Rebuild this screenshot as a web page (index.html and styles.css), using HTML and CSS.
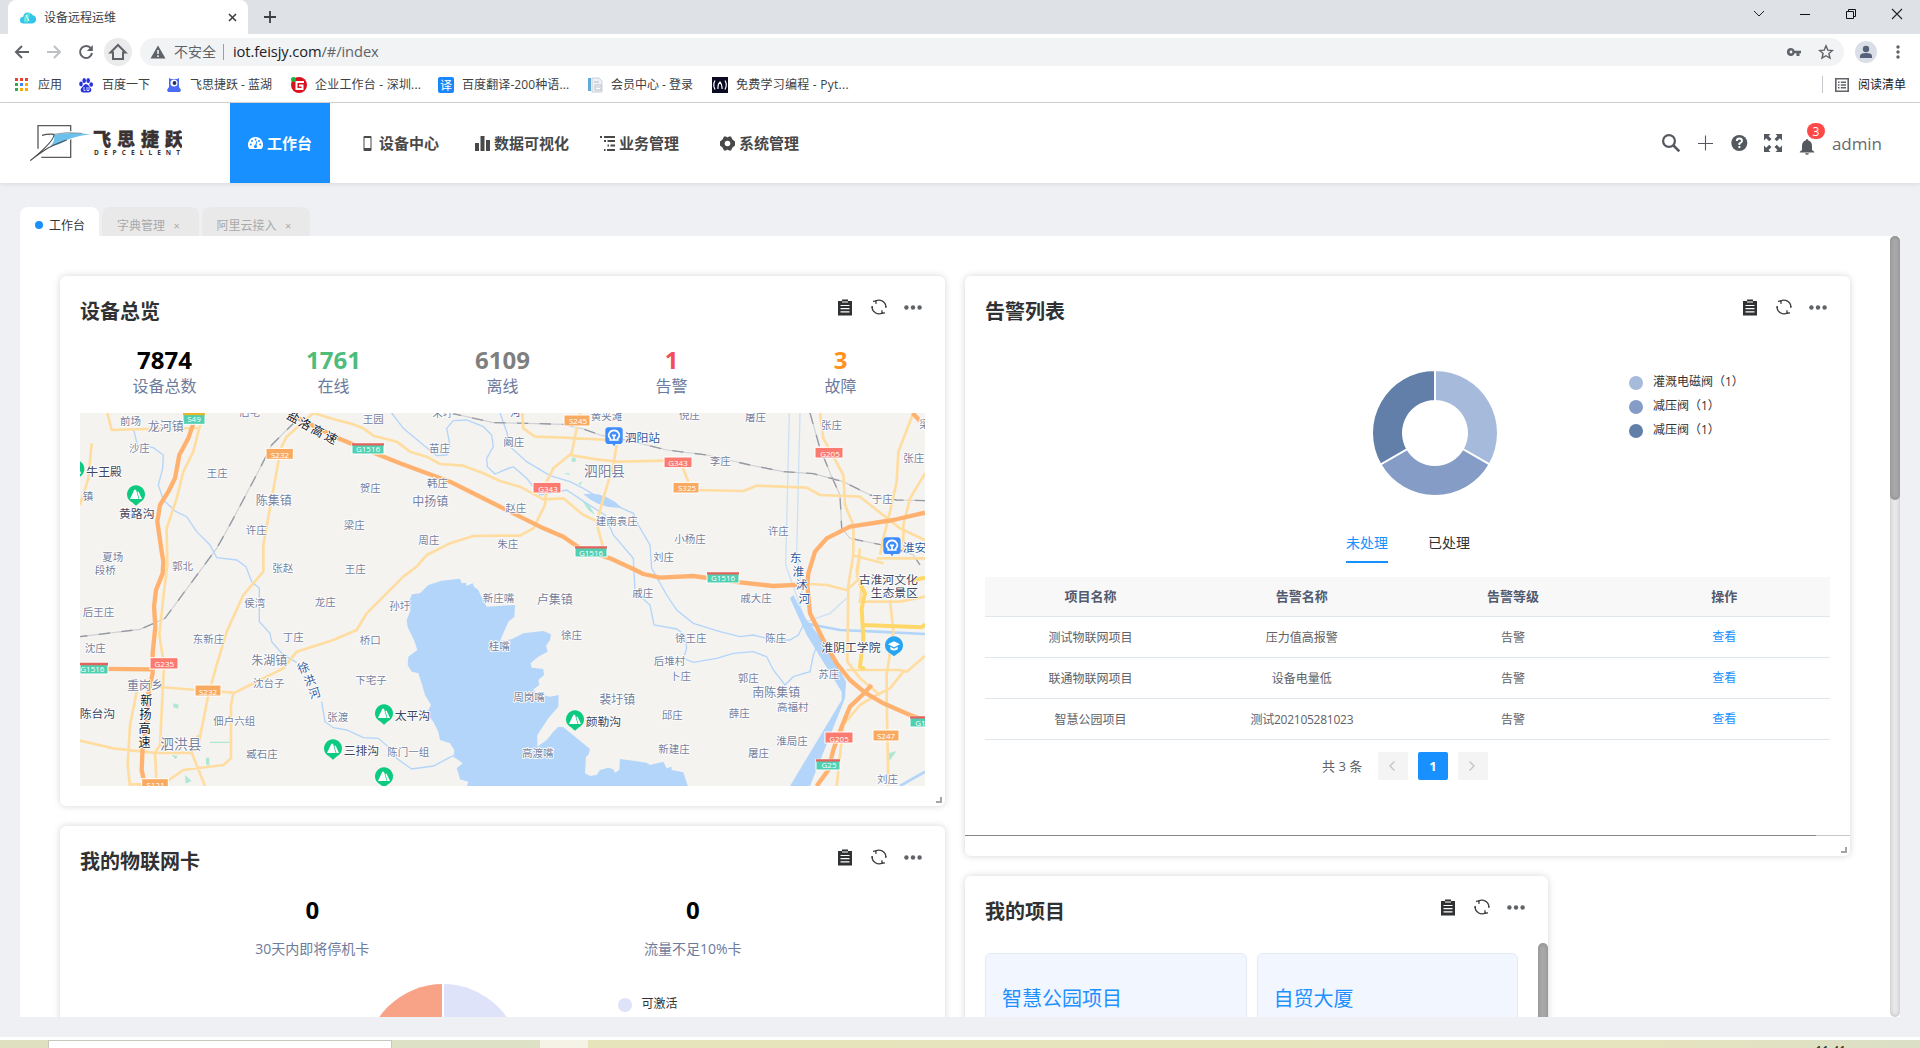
FILE: index.html
```html
<!DOCTYPE html>
<html lang="zh-CN">
<head>
<meta charset="utf-8">
<title>设备远程运维</title>
<link rel="stylesheet" href="styles.css">
</head>
<body>
<svg class="defs" width="0" height="0">
  <symbol id="clipboard" viewBox="0 0 14 17"><path fill="#2f3133" d="M0 2h4V0.500h6V2h4v14.500H0z"/><path stroke="#fff" stroke-width="1.200" d="M2.500 6.500h9M2.500 9.700h9M2.500 12.900h9M4 3h6"/></symbol>
  <symbol id="refresh" viewBox="0 0 16 16"><g fill="none" stroke="#3c3e42" stroke-width="1.300"><path d="M4.200 2.400A6.800 6.800 0 0 1 14.800 8.600M1.200 7a6.800 6.800 0 0 0 10.600 6.600"/><path d="M2 2.300l2.800-.4.300 3M14 13.900l-2.900.3-.2-3"/><path d="M1.200 7.500V9M14.800 8.500V7"/></g></symbol>
  <symbol id="dots" viewBox="0 0 18 5"><g fill="#5f6266"><circle cx="2.400" cy="2.500" r="2.200"/><circle cx="9" cy="2.500" r="2.200"/><circle cx="15.600" cy="2.500" r="2.200"/></g></symbol>
  <symbol id="grip" viewBox="0 0 6 6"><path d="M6 0v6H0V4h4V0z" fill="#a5a5a5"/></symbol>
  <g id="pin-park"><path d="M0 34L-12 24A27 27 0 1 1 12 24z" fill="#0cca80"/><path d="M-18 14L-5-14 0-14 8 14zM10 14L4-8 8-8 18 14z" fill="#fff"/></g>
  <g id="pin-rail"><rect x="-26" y="-26" width="52" height="50" rx="10" fill="#3f8cff"/><path d="M-6 22h12l-6 9z" fill="#3f8cff"/><path d="M-9 9C-24-2-12-17 0-17S24-2 9 9M-14 12h28M-6-2h12M0-2v12" fill="none" stroke="#fff" stroke-width="5"/></g>
  <g id="pin-school"><path d="M0 32L-12 23A27 27 0 1 1 12 23z" fill="#27a5f5"/><path d="M-18-4L0-13 18-4 0 5zM-11 3v8q11 7 22 0V3L0 9z" fill="#fff"/></g>
</svg>

<div class="tabstrip">
  <div class="browser-tab">
    <svg width="16" height="14" viewBox="0 0 16 14"><path d="M3.500 13.500a3.400 3.400 0 0 1-.3-6.800A5 5 0 0 1 12.500 5a4.300 4.300 0 0 1 0 8.500z" fill="#35c5ec"/><path d="M4 12c-1-5 2-9 6-9L8 12z" fill="#62e6d8"/><path d="M6 5l3 6" stroke="#fff"/></svg>
    <span>设备远程运维</span>
    <svg class="tab-close" width="9" height="9" viewBox="0 0 9 9"><path d="M1 1l7 7M8 1L1 8" stroke="#3c4043" stroke-width="1.600"/></svg>
  </div>
  <svg class="new-tab" width="12" height="12" viewBox="0 0 12 12"><path d="M6 0v12M0 6h12" stroke="#3c4043" stroke-width="1.800"/></svg>
  <div class="win-controls">
    <svg width="12" height="12" viewBox="0 0 12 12"><path d="M1 3l5 5 5-5" fill="none" stroke="#222"/></svg>
    <svg width="12" height="12" viewBox="0 0 12 12"><path d="M1 6.500h10" stroke="#111"/></svg>
    <svg width="12" height="12" viewBox="0 0 12 12"><path d="M1.500 3.500h7v7h-7zM3.500 3.500v-2h7v7h-2" fill="none" stroke="#111"/></svg>
    <svg width="12" height="12" viewBox="0 0 12 12"><path d="M1 1l10 10M11 1L1 11" stroke="#222" stroke-width="1.100"/></svg>
  </div>
</div>

<div class="toolbar">
  <svg class="tool" viewBox="0 0 28 28"><path d="M21 14H8M14 8l-6 6 6 6" fill="none" stroke="#5f6368" stroke-width="2"/></svg>
  <svg class="tool" viewBox="0 0 28 28"><path d="M7 14h13M14 8l6 6-6 6" fill="none" stroke="#bdc0c4" stroke-width="2"/></svg>
  <svg class="tool" viewBox="0 0 28 28"><path d="M19 10.500A6 6 0 1 0 20 15" fill="none" stroke="#5f6368" stroke-width="2"/><path d="M20.800 7v6h-6z" fill="#5f6368"/></svg>
  <svg class="tool home" viewBox="0 0 28 28"><path d="M6.500 14.500L14 7l7.500 7.500H19V21H9v-6.500z" fill="none" stroke="#5f6368" stroke-width="2"/></svg>
  <div class="omnibox">
    <svg width="16" height="14" viewBox="0 0 16 14"><path d="M8 .5L15.500 13.500H.5z" fill="#5f6368"/><path d="M8 5v4M8 10.300v1.600" stroke="#f1f3f4" stroke-width="1.600"/></svg>
    <span class="insecure">不安全</span>
    <span class="url">iot.feisjy.com<i>/#/index</i></span>
    <svg class="key" width="14" height="8" viewBox="0 0 14 8"><path d="M4 0a4 4 0 1 0 3.700 5.300H9.500V8h3V5.300H14V2.700H7.700A4 4 0 0 0 4 0zm0 2.600a1.400 1.400 0 1 1 0 2.800 1.400 1.400 0 0 1 0-2.800z" fill="#5f6368"/></svg>
    <svg width="16" height="16" viewBox="0 0 16 16"><path d="M8 1.800l1.800 4.300 4.600.4-3.500 3 1.100 4.600L8 11.700l-4 2.400 1.100-4.600-3.500-3 4.600-.4z" fill="none" stroke="#5f6368" stroke-width="1.400"/></svg>
  </div>
  <svg class="avatar" width="22" height="22" viewBox="0 0 22 22"><circle cx="11" cy="11" r="11" fill="#dadee6"/><circle cx="11" cy="8" r="3.200" fill="#546179"/><path d="M5 17v-2q0-3 6-3t6 3v2z" fill="#546179"/></svg>
  <svg width="4" height="14" viewBox="0 0 4 14"><g fill="#5f6368"><circle cx="2" cy="2" r="1.700"/><circle cx="2" cy="7" r="1.700"/><circle cx="2" cy="12" r="1.700"/></g></svg>
</div>

<div class="bookmarks">
  <div class="mark"><svg viewBox="0 0 16 16"><path d="M1 1h3v3H1zM6 1h3v3H6zM11 1h3v3h-3z" fill="#ea4335"/><path d="M1 6h3v3H1zM1 11h3v3H1z" fill="#34a853"/><path d="M6 6h3v3H6z" fill="#4285f4"/><path d="M11 6h3v3h-3zM6 11h3v3H6zM11 11h3v3h-3z" fill="#fbaa05"/></svg><span class="w24">应用</span></div>
  <div class="mark"><svg viewBox="0 0 16 16"><g fill="#2a32df"><ellipse cx="3" cy="7" rx="1.800" ry="2.400"/><ellipse cx="6.200" cy="3.600" rx="1.800" ry="2.500"/><ellipse cx="10.200" cy="3.600" rx="1.800" ry="2.500"/><ellipse cx="13.200" cy="7.500" rx="1.800" ry="2.300"/><path d="M8 7c2 0 3 2.500 4.500 4s1 4.500-2 4.500H5.500c-3 0-3.500-3-2-4.500S6 7 8 7z"/></g><path d="M6 10v3.500h1.500M9 10v3.500h2V10" fill="none" stroke="#fff" stroke-width=".8"/></svg><span class="w48">百度一下</span></div>
  <div class="mark"><svg viewBox="0 0 16 16"><path d="M3 1l2 1h6l2-1v9l2 3-1 2H2l-1-2 2-3z" fill="#4a6bf5"/><circle cx="8" cy="6" r="3.500" fill="#fff"/><circle cx="8.500" cy="6" r="1.900" fill="#24315a"/></svg><span class="w85">飞思捷跃 - 蓝湖</span></div>
  <div class="mark"><svg viewBox="0 0 16 16"><circle cx="8" cy="8" r="8" fill="#d8121f"/><circle cx="2.500" cy="2.500" r="2.500" fill="#15b63c"/><path d="M13 5H5.500v7h6V8.500H8" fill="none" stroke="#fff" stroke-width="2"/></svg><span class="w107">企业工作台 - 深圳...</span></div>
  <div class="mark"><svg viewBox="0 0 16 16"><rect width="16" height="16" rx="2" fill="#1787fb"/><text x="8" y="12.500" font-size="12" text-anchor="middle" fill="#fff">译</text></svg><span class="w109">百度翻译-200种语...</span></div>
  <div class="mark"><svg viewBox="0 0 16 16"><path d="M1 1h3v13H1z" fill="#62a8d8"/><path d="M5 1h7l3 3v11H5z" fill="#eef1f5" stroke="#c9d0d8"/><path d="M7 5h5M8 8h6v5H8zM9 10h4" fill="#fff" stroke="#b5bdc8"/></svg><span class="w85">会员中心 - 登录</span></div>
  <div class="mark"><svg viewBox="0 0 16 16"><path fill="#0a0a23" d="M0 0h16v16H0z"/><path d="M3 3.500q-2.500 4.500 0 9M13 3.500q2.500 4.500 0 9M6 12q-.5-5 2-7 2.500 3 2 7" fill="none" stroke="#fff" stroke-width="1.200"/></svg><span class="last">免费学习编程 - Pyt...</span></div>
  <div class="reading"><svg width="14" height="14" viewBox="0 0 14 14"><path d="M.8.800h12.400v12.400H.8z" fill="none" stroke="#5f6368" stroke-width="1.600"/><path d="M3 4.200h1.500M3 7h1.500M3 9.800h1.500M5.800 4.200H11M5.800 7H11M5.800 9.800H11" stroke="#5f6368" stroke-width="1.500"/></svg><span>阅读清单</span></div>
</div>

<header class="app-header">
  <svg class="logo" width="154" height="40" viewBox="28 123 154 40">
    <g transform="translate(20 108) scale(.33333)"><path d="M54 122V53h98v17M152 94v54H64" fill="none" stroke="#5a5b5d" stroke-width="4"/><path d="M100 81Q150 68 210 79 150 86 112 120L34 156Q78 122 97 94z" fill="#fff"/><path d="M102 80Q150 70 210 79 150 86 124 106 110 112 92 114 106 98 102 80z" fill="#6cc0ec"/><path d="M66 82Q84 77 102 79 104 98 32 157 62 134 78 124 96 112 140 96" fill="none" stroke="#4c4f52" stroke-width="3.500" stroke-linejoin="round"/><path d="M100 79Q140 70 186 76" fill="none" stroke="#68777f" stroke-width="2"/></g>
    <text class="logo-name" x="93" y="145.500" textLength="90">飞思捷跃</text>
    <text class="logo-sub" x="94" y="154.800" textLength="86">DEPCELLENT</text>
  </svg>
  <nav>
    <a class="nav-item active"><svg width="15" height="13" viewBox="0 0 15 13"><path d="M7.500 0A7.500 7.500 0 0 0 1.500 12h12A7.500 7.500 0 0 0 7.500 0z" fill="#fff"/><g fill="#1890ff"><circle cx="2.800" cy="7.500" r="1"/><circle cx="4" cy="4" r="1"/><circle cx="7.500" cy="2.500" r="1"/><circle cx="12.200" cy="7.500" r="1"/><circle cx="11" cy="4" r="1"/><circle cx="7.500" cy="9.500" r="1.600"/><path d="M7 9l1.500-5 .8.300L8.300 9z"/></g></svg><span>工作台</span></a>
    <a class="nav-item devices"><svg width="15" height="15" viewBox="0 0 15 15"><path d="M4.500 0h6a1 1 0 0 1 1 1v13a1 1 0 0 1-1 1h-6a1 1 0 0 1-1-1V1a1 1 0 0 1 1-1zM4.500 2v10h6V2z" fill="#484848" fill-rule="evenodd"/></svg><span>设备中心</span></a>
    <a class="nav-item charts"><svg width="15" height="15" viewBox="0 0 15 15"><path d="M0 7h4v8H0zM5.500 0h4v15h-4zM11 4h4v11h-4z" fill="#484848"/></svg><span>数据可视化</span></a>
    <a class="nav-item business"><svg width="15" height="15" viewBox="0 0 15 15"><path d="M0 1h2M4 1h11M4 5h2M7.500 5H15M7.500 9.500h1.500M10.500 9.500H15M4 14h1.500M7 14h8" stroke="#484848" stroke-width="1.800"/></svg><span>业务管理</span></a>
    <a class="nav-item system"><svg width="15" height="15" viewBox="0 0 15 15"><path d="M4 .5h2l1.500 1L9 .5h2l1.500 3 2.500 2v4l-2.500 2-1.500 3H9l-1.500-1-1.500 1H4l-1.500-3-2.500-2v-4l2.500-2zM7.500 4.700a2.800 2.800 0 1 0 0 5.600 2.800 2.800 0 0 0 0-5.600z" fill="#484848" fill-rule="evenodd"/></svg><span>系统管理</span></a>
  </nav>
  <div class="header-tools">
    <svg viewBox="0 0 18 18"><circle cx="7" cy="7" r="5.900" fill="none" stroke="#54585f" stroke-width="2.200"/><path d="M11 11l6.300 6.300" stroke="#54585f" stroke-width="2.600"/></svg>
    <svg viewBox="0 0 18 18"><path d="M9.500 1.500v15M2 9.500h15" stroke="#54585f" stroke-width="1.100"/></svg>
    <svg viewBox="0 0 18 18"><circle cx="9.300" cy="9" r="8" fill="#54585f"/><path d="M6.800 7q0-2.500 2.600-2.500T12 7Q12 8.200 9.400 9.500V11M9.400 12v2" fill="none" stroke="#fff" stroke-width="1.900"/></svg>
    <svg viewBox="0 0 18 18"><path d="M0 0h6.500L4.500 2l3 3-2.300 2.300-3-3L0 6.500zM18 0h-6.500l2 2-3 3 2.300 2.300 3-3L18 6.500zM0 18h6.500l-2-2 3-3-2.300-2.300-3 3L0 11.500zM18 18h-6.500l2-2-3-3 2.300-2.300 3 3 2.200-2.200z" fill="#54585f"/></svg>
    <div class="bell"><svg viewBox="0 0 18 18"><path d="M9 2q1 0 1 1.200Q14 4.500 14 9v4l2.200 1.800v.7H1.800v-.7L4 13V9q0-4.500 4-5.800Q8 2 9 2zM7 16.300h4q-.5 1.500-2 1.500t-2-1.500z" fill="#54585f"/></svg><span class="badge">3</span></div>
    <span class="user">admin</span>
  </div>
</header>

<div class="page-tabs">
  <div class="page-tab on"><i></i>工作台</div>
  <div class="page-tab">字典管理<b>×</b></div>
  <div class="page-tab">阿里云接入<b>×</b></div>
</div>

<main class="workspace">
  <div class="board">
    <div class="column">
      <section class="card overview">
        <div class="card-head"><h2>设备总览</h2><div class="actions"><svg class="i-clip"><use href="#clipboard"/></svg><svg class="i-ref"><use href="#refresh"/></svg><svg class="i-dots"><use href="#dots"/></svg></div></div>
        <div class="stats">
          <div><strong>7874</strong><span>设备总数</span></div>
          <div><strong class="green">1761</strong><span>在线</span></div>
          <div><strong class="gray">6109</strong><span>离线</span></div>
          <div><strong class="red">1</strong><span>告警</span></div>
          <div><strong class="orange">3</strong><span>故障</span></div>
        </div>
        <svg class="map" width="845" height="373" viewBox="90 444 2535 1119">
          <path fill="#f4f3f0" d="M90 444h2535v1119H90z"/>
          <!-- lake -->
          <path transform="translate(0 825)" fill="#b3d5fa" d="M1086 163L1110 160 1135 135 1175 122 1230 116 1235 130 1248 128 1250 138 1268 130 1272 140 1285 150 1295 172 1310 200 1395 195 1393 230 1375 245 1350 303 1385 298 1420 280 1480 273 1503 283 1500 300 1488 318 1493 335 1470 347 1455 358 1442 370 1445 383 1480 387 1482 405 1465 420 1468 435 1450 448 1460 462 1500 470 1526 465 1525 500 1495 535 1462 585 1462 620 1490 600 1510 575 1525 560 1540 562 1575 590 1620 627 1615 645 1608 650 1605 700 1620 708 1640 705 1650 690 1675 683 1690 688 1695 698 1708 690 1710 657 1750 662 1790 668 1800 675 1840 665 1850 685 1865 680 1865 690 1900 697 1914 740 1250 740 1255 725 1230 718 1225 700 1220 685 1238 670 1225 660 1210 650 1213 630 1200 610 1170 600 1165 575 1150 545 1130 520 1143 495 1125 465 1115 430 1105 400 1085 395 1073 375 1075 350 1102 330 1092 300 1073 262 1070 240 1082 210 1075 190z"/>
          <!-- rivers -->
          <g class="river">
            <path d="M250 490L262 540 310 548 340 570 338 610 325 660 340 705 375 738 410 755 440 800 480 840 500 878 560 885 588 905 605 950 628 970 628 1070 660 1105 665 1130 700 1170 740 1192M815 1310L825 1370 850 1388 890 1395 940 1418 985 1420 1020 1450 1040 1480 1085 1512 1150 1503 1210 1472M1025 444L1060 490 1120 540 1160 572 1190 570 1200 540 1190 490 1210 467 1250 465 1300 485 1325 510 1330 545 1310 580 1312 605 1335 627 1380 608M1350 444L1370 500 1380 545 1430 590 1500 632 1560 650 1600 670 1660 705 1750 745 1765 780 1800 840 1805 910 1850 990 1880 1035 1930 1075 2010 1100 2070 1115 2110 1110 2170 1125 2220 1125 2245 1110 2260 1080 M1350 620L1390 605 1430 640 1470 690 1550 675 1610 715 1665 750 1690 810 1750 880 1755 980 1800 1020 1812 1080 1880 1092 1905 1110 1910 1150 1900 1180 1930 1192 2000 1180 2050 1165 2110 1160 2150 1175 2170 1215 2205 1260 2230 1235 2280 1220 2290 1170 2310 1120"/>
            <path opacity=".6" d="M2218 444L2207 900 2260 1050M2250 444L2240 860 2260 1010M2390 1000L2340 1045 2270 1070"/>
          </g>
          <path d="M1600 688q65-10 115 40-65 5-115-40" fill="#b3d5fa"/>
          <path d="M2230 990L2270 1065 2330 1140 2388 1250 2385 1300 2280 1563 2220 1563 2300 1430 2375 1305 2375 1280 2270 1110 2220 1000z" fill="#b3d5fa"/>
          <path d="M2265 1075L2370 1095 2480 1100 2625 1107M2550 1563L2625 1520" fill="none" stroke="#b3d5fa" stroke-width="8"/>
          <g fill="#aee8d4"><path d="M370 1315l16 4-2 12-14-4zM480 1430h60v4h-60zM468 1478h10v25l-10-5zM365 1470l18 3-6 10zM405 1530l20 18-18 8zM1565 578h12v12h-12zM1595 705l25 20 15 25-20-15zM1540 625h18v5zM1585 655l12-6-6 12zM2515 1465l25-7-22 30z"/></g>
          <!-- railways -->
          <g><path class="rail-base" d="M735 470L665 540 630 610 545 770 500 850 345 1060 270 1093 90 1115M1200 444L1330 473 1430 475 1540 478 1600 492 1650 510 1750 530 1850 555 1970 570 2100 600 2200 620 2290 626 2380 650 2460 690 2540 705 2625 707M2280 444L2310 550 2345 635 2370 690 2375 790 2400 820 2520 845 2590 870 2610 900"/><path class="rail" d="M735 470L665 540 630 610 545 770 500 850 345 1060 270 1093 90 1115M1200 444L1330 473 1430 475 1540 478 1600 492 1650 510 1750 530 1850 555 1970 570 2100 600 2200 620 2290 626 2380 650 2460 690 2540 705 2625 707M2280 444L2310 550 2345 635 2370 690 2375 790 2400 820 2520 845 2590 870 2610 900"/></g>
          <!-- minor roads -->
          <g class="minor">
            <path d="M172 444L185 495 290 492 445 489M450 480L430 560 400 620 380 700 350 790 352 900 342 980 328 1110 342 1200 330 1440 315 1463 320 1563M125 535L115 640 90 720M790 444L710 515 695 545 685 590 640 840 640 920 580 990 530 1100 500 1200 475 1290 447 1430M790 444L860 465 900 475 940 490 970 512 1040 530 1080 560 1130 575 1170 597 1240 602 1300 625 1350 648M90 1427L190 1450 280 1460 315 1464 425 1463 445 1410M425 1463L465 1563M330 1266L440 1275 550 1283M550 1285L600 1260 700 1210 740 1160 850 1125 920 1095 950 1045 1060 935 1100 905 1130 870 1200 835 1270 813 1350 812M550 1285L543 1320 543 1480 520 1500 400 1515 350 1550M260 1280L240 1380 233 1500 240 1563M240 1558L320 1558"/>
            <path d="M1417 444L1420 490 1455 515 1540 518 1680 525M1590 444L1580 490 1565 565 1510 610 1490 650 1485 720 1450 790 1410 812 1350 812M1560 570L1640 583 1700 590 1850 587M1700 540L1690 600 1660 700 1640 775 1660 850M1350 648L1410 665 1480 703 1540 700 1600 750 1640 768M1890 587L1915 650M1930 675L2080 678 2120 662 2270 668 2310 690 2430 695 2480 735 2550 790 2625 825M2310 444L2320 520 2380 630 2385 720 2410 780 2410 870 2395 960 2392 1190 2430 1240 2490 1290M2590 444L2545 560 2540 650 2520 740 2500 820 2490 870M2625 625L2580 700 2560 780 2560 860"/>
            <path d="M2405 870L2500 895M2430 850L2420 920 2435 960 2430 1010M2280 957L2330 960 2390 975 2430 940M2425 1010L2550 1010 2625 995M2520 1005L2530 1100 2510 1230 2510 1300 2515 1563M2390 1215L2550 1215 2570 1220 2625 1173M2560 1220L2520 1270 2480 1290 2430 1320 2380 1380 2360 1563M2430 870L2420 940M2480 880L2625 880"/>
          </g>
          <g fill="none" stroke="#ffd766" stroke-width="12"><path d="M2430 955L2445 985 2435 1030 2440 1120 2430 1205 2445 1213M2440 1080L2615 1087 2625 1078M2590 945L2625 938"/></g>
          <!-- expressways -->
          <g class="express"><path d="M430 475L415 520 388 570 375 640 355 680 330 720 322 770 335 860 340 890 338 925 318 975 312 1025 316 1085 308 1165 308 1225 295 1285 290 1385 278 1445 275 1515 285 1563M90 1211L305 1213M725 450L870 522 950 555 1050 595 1200 650 1280 690 1366 733 1470 785 1540 815 1590 850 1680 880 1750 912 1780 927 1830 938 1930 933 2050 950 2170 963 2270 958M2625 743L2530 765 2400 785 2330 820 2295 860 2275 925 2272 960 2280 1045 2320 1125 2360 1195 2400 1245 2445 1283 2500 1315 2580 1350 2625 1365M2465 1260L2440 1287 2400 1325 2375 1385 2350 1455 2335 1515 2300 1563M2588 444L2610 468"/></g>

          <!-- road shields -->
          <g class="shield">
            <g fill="#4fd0b2"><rect x="399" y="444" width="66" height="34"/><rect x="906" y="535" width="96" height="32"/><rect x="1575" y="844" width="96" height="32"/><rect x="90" y="1194" width="84" height="33"/><rect x="1971" y="922" width="96" height="32"/><rect x="2298" y="1483" width="72" height="32"/><rect x="2580" y="1354" width="50" height="32"/></g>
            <path class="band" d="M906 538h96M1575 847h96M90 1197h84M1971 925h96M2298 1486h72M2580 1357h50"/>
            <path class="band gold" d="M399 447h66"/>
            <g fill="#fb7b70"><rect x="300" y="1178" width="84" height="34"/><rect x="1842" y="576" width="84" height="32"/><rect x="1449" y="652" width="84" height="32"/><rect x="2295" y="547" width="84" height="32"/><rect x="2325" y="1401" width="84" height="33"/></g>
            <g fill="#f9aa61"><rect x="648" y="550" width="82" height="33"/><rect x="435" y="1260" width="78" height="33"/><rect x="275" y="1541" width="80" height="30"/><rect x="1542" y="450" width="78" height="33"/><rect x="1869" y="652" width="78" height="32"/><rect x="2469" y="1395" width="78" height="33"/></g>
          </g>
          <g class="shield-text"><text x="432" y="461">S49</text><text x="954" y="550">G1516</text><text x="1623" y="861">G1516</text><text x="127" y="1211">G1516</text><text x="2019" y="937">G1516</text><text x="2337" y="1498">G25</text><text x="2611" y="1372">G1</text><text x="343" y="1195">G235</text><text x="1884" y="592">G343</text><text x="1494" y="669">G343</text><text x="2340" y="564">G205</text><text x="2367" y="1419">G205</text><text x="690" y="567">S232</text><text x="474" y="1278">S232</text><text x="317" y="1557">S121</text><text x="1584" y="466">S245</text><text x="1911" y="667">S325</text><text x="2508" y="1411">S247</text></g>

          <!-- villages -->
          <g class="place">
            <text x="210" y="469">前场</text><text x="236" y="548">沙庄</text><text x="470" y="624">王庄</text><text x="587" y="794">许庄</text><text x="938" y="461">王园</text><text x="1137" y="549">苗庄</text><text x="1131" y="655">韩庄</text><text x="929" y="668">贺庄</text><text x="881" y="780">梁庄</text><text x="1105" y="824">周庄</text><text x="1342" y="837">朱庄</text><text x="568" y="441">后宅</text><text x="1147" y="443">朱圩</text><text x="98" y="692">镇</text>
            <text x="1622" y="454">黄夹滩</text><text x="1887" y="450">倪庄</text><text x="2085" y="456">屠庄</text><text x="2313" y="481">张庄</text><text x="2608" y="478">梁庄</text><text x="1360" y="531">阚庄</text><text x="1979" y="587">李庄</text><text x="2560" y="580">张庄</text><text x="2465" y="701">于庄</text><text x="1366" y="730">赵庄</text><text x="1637" y="768">建南袁庄</text><text x="2153" y="797">许庄</text><text x="1873" y="822">小杨庄</text><text x="1809" y="875">刘庄</text>
            <g transform="translate(0 825)"><text x="157" y="50">夏场</text><text x="134" y="91">段桥</text><text x="366" y="79">郭北</text><text x="667" y="84">张赵</text><text x="884" y="86">王庄</text><text x="583" y="189">侯湾</text><text x="794" y="186">龙庄</text><text x="1018" y="198">孙圩</text><text x="1298" y="173">新庄嘴</text><text x="98" y="215">后王庄</text><text x="428" y="298">东新庄</text><text x="698" y="290">丁庄</text><text x="929" y="301">桥口</text><text x="104" y="323">沈庄</text><text x="609" y="429">沈台子</text><text x="916" y="419">下宅子</text><text x="490" y="542">佃户六组</text><text x="832" y="531">张渡</text><text x="1012" y="637">陈门一组</text><text x="589" y="641">臧石庄</text><text x="1316" y="318">桂嘴</text>
            <text x="1747" y="160">戚庄</text><text x="2071" y="174">戚大庄</text><text x="1533" y="286">徐庄</text><text x="1875" y="295">徐王庄</text><text x="2146" y="295">陈庄</text><text x="1811" y="364">后堆村</text><text x="1860" y="408">卜庄</text><text x="2063" y="415">郭庄</text><text x="2181" y="501">高福村</text><text x="2305" y="401">苏庄</text><text x="1390" y="471">周岗嘴</text><text x="1835" y="524">邱庄</text><text x="2036" y="520">薛庄</text><text x="2179" y="603">淮局庄</text><text x="1825" y="628">新建庄</text><text x="2094" y="640">屠庄</text><text x="1416" y="638">高渡嘴</text><text x="2481" y="717">刘庄</text></g>
          </g>
          <!-- towns -->
          <g class="place town"><text x="293" y="484">龙河镇</text><text x="617" y="706">陈集镇</text><text x="1087" y="710">中扬镇</text><text x="604" y="1186">朱湖镇</text><text x="231" y="1260">重岗乡</text><text x="1460" y="1004">卢集镇</text><text x="2107" y="1282">南陈集镇</text><text x="1648" y="1303">裴圩镇</text></g>
          <g class="place county"><text x="1602" y="617">泗阳县</text><text x="331" y="1435">泗洪县</text></g>
          <!-- landmarks -->
          <g class="place poi"><text x="109" y="617">牛王殿</text><text x="207" y="744">黄路沟</text><text x="89" y="1343">陈台沟</text><text x="1034" y="1350">太平沟</text><text x="881" y="1454">三排沟</text><text x="1607" y="1367">颜勒沟</text><text x="2426" y="943">古淮河文化</text><text x="2462" y="982">生态景区</text><text x="2314" y="1145">淮阴工学院</text></g>
          <g class="place station"><text x="1724" y="517">泗阳站</text><text x="2558" y="846">淮安站</text></g>
          <g class="place station glyphs"><text x="2237" y="875">东</text><text x="2245" y="917">淮</text><text x="2255" y="957">沭</text><text x="2263" y="998">河</text><text transform="translate(759 1206) rotate(-18)">徐</text><text transform="translate(778 1244) rotate(-18)">洪</text><text transform="translate(793 1282) rotate(-18)">河</text><text x="1396" y="440" font-size="30">河</text></g>
          <g class="place roadname glyphs"><text x="289" y="1306">新</text><text x="286" y="1348">扬</text><text x="284" y="1390">高</text><text x="283" y="1432">速</text><text transform="translate(730 456) rotate(28)">盐</text><text transform="translate(765 477) rotate(28)">洛</text><text transform="translate(803 498) rotate(28)">高</text><text transform="translate(843 518) rotate(28)">速</text></g>
          <use href="#pin-park" x="258" y="688"/><use href="#pin-park" x="76" y="612"/><use href="#pin-park" x="1002" y="1345"/><use href="#pin-park" x="849" y="1450"/><use href="#pin-park" x="1002" y="1534"/><use href="#pin-park" x="1575" y="1363"/>
          <use href="#pin-rail" x="1692" y="513"/><use href="#pin-rail" x="2526" y="843"/><use href="#pin-school" x="2532" y="1142"/>
        </svg>
        <svg class="grip"><use href="#grip"/></svg>
      </section>

      <section class="card">
        <div class="card-head"><h2>我的物联网卡</h2><div class="actions"><svg class="i-clip"><use href="#clipboard"/></svg><svg class="i-ref"><use href="#refresh"/></svg><svg class="i-dots"><use href="#dots"/></svg></div></div>
        <div class="stats sim">
          <div><strong>0</strong><span>30天内即将停机卡</span></div>
          <div><strong>0</strong><span>流量不足10%卡</span></div>
        </div>
        <div class="sim-chart">
          <svg width="160" height="160" viewBox="-80 -80 160 160"><path d="M0 0V-78A78 78 0 0 1 0 78z" fill="#dee3fa"/><path d="M0 0V-78A78 78 0 0 0 0 78z" fill="#f8a387"/><path d="M0-80V80" stroke="#fff" stroke-width="2"/></svg>
          <div class="legend"><p><i class="c4"></i>可激活</p></div>
        </div>
      </section>
    </div>

    <div class="column">
      <section class="card alarms">
        <div class="card-head"><h2>告警列表</h2><div class="actions"><svg class="i-clip"><use href="#clipboard"/></svg><svg class="i-ref"><use href="#refresh"/></svg><svg class="i-dots"><use href="#dots"/></svg></div></div>
        <div class="alarm-chart">
          <svg width="126" height="126" viewBox="-63 -63 126 126"><g stroke="#fff" stroke-width="2"><path d="M0-63A63 63 0 0 1 54.560 31.500L27.700 16A32 32 0 0 0 0-32z" fill="#a6badc"/><path d="M54.560 31.500A63 63 0 0 1-54.560 31.500L-27.700 16A32 32 0 0 0 27.700 16z" fill="#859dc6"/><path d="M-54.560 31.500A63 63 0 0 1 0-63V-32A32 32 0 0 0-27.700 16z" fill="#627fa9"/></g></svg>
          <div class="legend"><p><i class="c1"></i>灌溉电磁阀（1）</p><p><i class="c2"></i>减压阀（1）</p><p><i class="c3"></i>减压阀（1）</p></div>
        </div>
        <div class="switch"><span class="on">未处理</span><span>已处理</span></div>
        <table>
          <thead><tr><th>项目名称</th><th>告警名称</th><th>告警等级</th><th>操作</th></tr></thead>
          <tbody>
            <tr><td>测试物联网项目</td><td>压力值高报警</td><td>告警</td><td><a>查看</a></td></tr>
            <tr><td>联通物联网项目</td><td>设备电量低</td><td>告警</td><td><a>查看</a></td></tr>
            <tr><td>智慧公园项目</td><td class="tight">测试202105281023</td><td>告警</td><td><a>查看</a></td></tr>
          </tbody>
        </table>
        <div class="pager"><span>共 3 条</span>
          <b><svg width="8" height="12" viewBox="0 0 8 12"><path d="M6.500 1.500L2 6l4.500 4.500" fill="none" stroke="#c0c4cc" stroke-width="1.400"/></svg></b><b class="on">1</b><b><svg width="8" height="12" viewBox="0 0 8 12"><path d="M1.500 1.500L6 6l-4.500 4.500" fill="none" stroke="#c0c4cc" stroke-width="1.400"/></svg></b></div>
        <div class="hscroll"><i></i></div>
        <svg class="grip"><use href="#grip"/></svg>
      </section>

      <section class="card projects">
        <div class="card-head"><h2>我的项目</h2><div class="actions"><svg class="i-clip"><use href="#clipboard"/></svg><svg class="i-ref"><use href="#refresh"/></svg><svg class="i-dots"><use href="#dots"/></svg></div></div>
        <div class="project-body">
          <div class="tiles"><div class="tile">智慧公园项目</div><div class="tile">自贸大厦</div></div>
          <div class="inner-scroll"></div>
        </div>
      </section>
    </div>
  </div>
  <div class="vscroll"><i></i></div>
</main>

<footer class="taskbar"><div class="seg a"></div><div class="seg b"></div><div class="seg c"></div><div class="seg d"></div><div class="seg e"><span>11:41</span></div></footer>
</body>
</html>
```
FILE: styles.css
```css
* { box-sizing: border-box; }
body {
  margin: 0; width: 1920px; height: 1048px; overflow: hidden;
  display: flex; flex-direction: column; background: #eff0f4;
  font-family: "Open Sans", "Noto Sans CJK SC", sans-serif; font-size: 12px; color: #333;
}
svg { display: block; flex: none; }
i { font-style: normal; }
h2, p { margin: 0; }
.defs { position: absolute; }

/* browser chrome */
.tabstrip { height: 34px; flex: none; background: #dee1e6; display: flex; align-items: center; padding-left: 8px; }
.browser-tab {
  width: 240px; height: 34px; background: #fff; border-radius: 8px 8px 0 0;
  display: flex; align-items: center; gap: 8px; padding: 0 11px 0 12px; color: #3c4043; line-height: 34px;
}
.browser-tab span { padding-top: 1px; }
.tab-close { margin-left: auto; }
.new-tab { margin: 0 0 0 16px; }
.win-controls { margin-left: auto; display: flex; gap: 34px; padding: 0 17px 6px 0; }
.toolbar { height: 36px; flex: none; background: #fff; display: flex; align-items: center; padding: 0 20px 0 8px; gap: 4px; }
.tool { width: 28px; height: 28px; border-radius: 50%; }
.home { background: #ebebec; }
.omnibox {
  flex: 1; margin-left: 4px; height: 28px; border-radius: 14px; background: #f1f3f4;
  display: flex; align-items: center; padding: 0 10px; gap: 8px;
}
.insecure { font-size: 14px; color: #5f6368; border-right: 1px solid #9aa0a6; padding-right: 7px; line-height: 16px; }
.url { font-size: 14.700px; letter-spacing: -.1px; line-height: 20px; padding-bottom: 2px; color: #202124; margin-left: 1px; }
.url i { color: #5f6368; }
.key { margin-left: auto; margin-right: 9px; }
.avatar { margin: 0 15px 0 7px; }
.bookmarks { height: 33px; flex: none; background: #fff; border-bottom: 1px solid #d5d6d8; display: flex; align-items: center; padding: 0 14px 3px; gap: 16px; color: #3c4043; }
.mark { display: flex; align-items: center; gap: 8px; white-space: nowrap; line-height: 16px; }
.mark svg { width: 16px; height: 16px; }
.mark span, .reading span { padding-top: 1px; }
.w24 { width: 24px; } .w48 { width: 48px; } .w85 { width: 85px; } .w107 { width: 107px; letter-spacing: .2px; } .w109 { width: 109px; letter-spacing: .1px; }
.last { letter-spacing: .25px; }
.reading { margin-left: auto; display: flex; align-items: center; gap: 9px; padding-left: 12px; border-left: 1px solid #c4c7cb; line-height: 16px; color: #202124; }

/* application header */
.app-header { height: 80px; flex: none; background: #fff; display: flex; align-items: center; padding: 0 39px 0 28px; box-shadow: 0 1px 4px rgba(0, 21, 41, .1); }
.logo-name { font-size: 18px; font-weight: 900; fill: #3a3232; stroke: #3a3232; stroke-width: .4px; }
.logo-sub { font-size: 6.500px; font-weight: 700; fill: #3a3232; }
nav { display: flex; height: 80px; margin-left: 48px; }
.nav-item { display: flex; align-items: center; gap: 4px; font-size: 15px; font-weight: 700; color: #484848; white-space: nowrap; }
.nav-item span { padding-bottom: 2px; }
.nav-item.active { width: 100px; padding-left: 18px; background: #1890ff; color: #fff; }
.devices { margin-left: 30px; }
.charts { margin-left: 36px; }
.business { margin-left: 31px; }
.system { margin-left: 41px; }
.header-tools { margin-left: auto; display: flex; align-items: center; gap: 16px; }
.header-tools svg { width: 18px; height: 18px; }
.bell { position: relative; padding-top: 5px; }
.badge { position: absolute; left: 9px; top: -9px; width: 18px; height: 16px; border-radius: 8px; background: #ff4949; color: #fff; text-align: center; line-height: 17px; }
.user { font-size: 17px; color: #666a70; width: 49px; letter-spacing: -.1px; }

.page-tabs { display: flex; gap: 3px; padding: 24px 0 0 20px; height: 53px; flex: none; }
.page-tab { height: 29px; border-radius: 8px 8px 0 0; background: #e9e9e9; color: #aaa; display: flex; align-items: center; padding: 7px 17px 0 15px; }
.page-tab.on { background: #fff; color: #333; width: 79px; padding: 7px 0 0 15px; }
.page-tab i { width: 8px; height: 8px; border-radius: 50%; background: #1890ff; margin-right: 6px; }
.page-tab b { font-weight: 400; font-size: 11px; margin-left: 8.500px; width: 8px; }

/* dashboard */
.workspace { height: 781px; flex: none; margin: 0 20px; background: #fff; overflow: hidden; display: flex; }
.board { display: flex; align-items: flex-start; gap: 20px; padding: 40px; flex: 1; }
.column { width: 885px; display: flex; flex-direction: column; gap: 20px; }
.card { position: relative; flex: none; background: #fff; border-radius: 6px; box-shadow: 0 0 7px rgba(0, 0, 0, .17); padding: 0 20px; }
.overview { height: 530px; }
.alarms { height: 580px; }
.projects { width: 583px; padding-right: 0; }
.card-head { display: flex; justify-content: space-between; height: 69px; padding-top: 19px; }
h2 { font-size: 20px; line-height: 30px; padding-top: 2px; font-weight: 700; color: #303133; }
.actions { display: flex; align-items: center; gap: 18px; height: 24px; padding-right: 3px; }
.projects .actions { padding-right: 23px; }
.i-clip { width: 14px; height: 17px; }
.i-ref { width: 16px; height: 16px; margin-right: -1px; margin-left: 1px; }
.i-dots { width: 18px; height: 5px; }
.stats { display: flex; text-align: center; }
.stats div { flex: 1; }
.stats strong { display: block; font-size: 24px; line-height: 30px; color: #000; }
.stats span { display: block; font-size: 16px; line-height: 22px; color: #6d7b9c; }
.stats .green { color: #4ebd7c; } .stats .gray { color: #7f7f7f; } .stats .red { color: #f14e5c; } .stats .orange { color: #ff911c; }
.map { margin-top: 16px; }
.grip { position: absolute; width: 6px; height: 6px; right: 3px; bottom: 3px; }
.sim { padding: 0 42px; }
.sim strong { padding-bottom: 2px; }
.sim span { font-size: 14px; line-height: 20px; margin-top: 12px; }
.sim-chart { display: flex; margin: 23px 0 0 283px; gap: 94.500px; height: 160px; }
.legend p { display: flex; align-items: center; height: 24px; gap: 10px; line-height: 24px; white-space: nowrap; }
.legend i { width: 14px; height: 14px; border-radius: 50%; margin-top: 1px; }
.c1 { background: #a6badc; } .c2 { background: #859dc6; } .c3 { background: #627fa9; } .c4 { background: #dee3fa; }
.sim-chart .legend { padding-top: 10px; }
.alarm-chart { display: flex; height: 162px; margin: 25px 0 0 387px; gap: 131px; }

/* map */
.river { fill: none; stroke: #b3d5fa; stroke-width: 4; }
.minor { fill: none; stroke: #ffdda0; stroke-width: 8; stroke-linejoin: round; }
.express { fill: none; stroke: #ffb26f; stroke-width: 13; stroke-linejoin: round; }
.rail { fill: none; stroke: #969aa3; stroke-width: 4; stroke-dasharray: 34 34; }
.rail-base { fill: none; stroke: #cfd1d4; stroke-width: 3.500; }
.shield rect { stroke: #fff; stroke-width: 3; }
.band { stroke: #e4625c; stroke-width: 7; } .band.gold { stroke: #e8b62e; }
.shield-text { font-size: 24px; fill: #fff; text-anchor: middle; dominant-baseline: central; }
.place { font-size: 31.500px; font-weight: 400; fill: #75819d; dominant-baseline: central; paint-order: stroke; stroke: #fff; stroke-width: 5px; stroke-linejoin: round; }
.town { font-size: 36px; }
.county { font-size: 41px; }
.poi { font-size: 35.500px; fill: #3b4662; }
.station { font-size: 35.500px; fill: #2f5a9c; }
.roadname { font-size: 37px; fill: #14181f; }
.glyphs { text-anchor: middle; }

/* alarm list */
.switch { display: flex; gap: 40px; padding-left: 361px; height: 45px; font-size: 14px; line-height: 20px; }
.switch span { padding-top: 1px; height: 31px; color: #303133; }
.switch .on { color: #1890ff; border-bottom: 2px solid #1890ff; }
table { width: 845px; border-collapse: separate; border-spacing: 0; table-layout: fixed; text-align: center; }
th { height: 40px; padding: 0 0 2px; background: #f8f8f9; font-size: 13px; color: #515a6e; border-bottom: 1px solid #dfe6ec; }
td { height: 41px; padding: 0; border-bottom: 1px solid #dfe6ec; color: #606266; }
td.tight { letter-spacing: -.25px; }
td a { color: #1890ff; position: relative; top: -1px; }
.pager { display: flex; align-items: center; gap: 10px; margin: 12px 0 0 337px; height: 28px; font-size: 13px; color: #606266; }
.pager span { width: 46px; white-space: nowrap; padding-bottom: 2px; }
.pager b { width: 30px; height: 28px; border-radius: 2px; background: #f4f4f5; display: flex; align-items: center; justify-content: center; padding-right: 2px; }
.pager .on { background: #1890ff; color: #fff; padding-right: 0; }
.hscroll { margin: 55px -20px 0; height: 1px; background: #c6c6c6; }
.hscroll i { display: block; width: 851px; height: 1px; background: #868686; }

/* projects */
.project-body { display: flex; justify-content: space-between; margin-top: -2px; height: 240px; }
.tiles { display: flex; gap: 10px; padding-top: 10px; }
.tile { width: 261.500px; height: 200px; border: 1px solid #e3e9f5; border-radius: 6px; background: #f2f6fe; color: #1f90ff; font-size: 20px; line-height: 30px; padding: 30px 16px; }
.inner-scroll { width: 10px; background: #a8a8a8; border-radius: 5px; box-shadow: inset 0 0 4px rgba(0, 0, 0, .2); }
.vscroll { width: 10px; background: #e8e8e8; border-radius: 5px; box-shadow: inset 0 0 4px rgba(0, 0, 0, .2); }
.vscroll i { display: block; height: 264px; border-radius: 5px; background: #a8a8a8; box-shadow: inset 0 0 4px rgba(0, 0, 0, .2); }

.taskbar { margin-top: 20px; height: 11px; flex: none; border-top: 3px solid #fff; display: flex; }
.seg { height: 8px; background: #dfe0c0; }
.a { width: 48px; }
.b { width: 344px; background: #fff; border: 1px solid #c5c8bd; border-bottom: 0; }
.c { width: 148px; background: #dde1c6; }
.d { width: 48px; background: #f4f3e5; }
.e { flex: 1; overflow: hidden; background: linear-gradient(90deg, #e5e4ba, #e6e4bf 80%, #dadfc6); text-align: right; color: #111; padding-right: 74px; }
.e span { display: block; line-height: 16px; padding-top: 3px; font-size: 12px; }
```
